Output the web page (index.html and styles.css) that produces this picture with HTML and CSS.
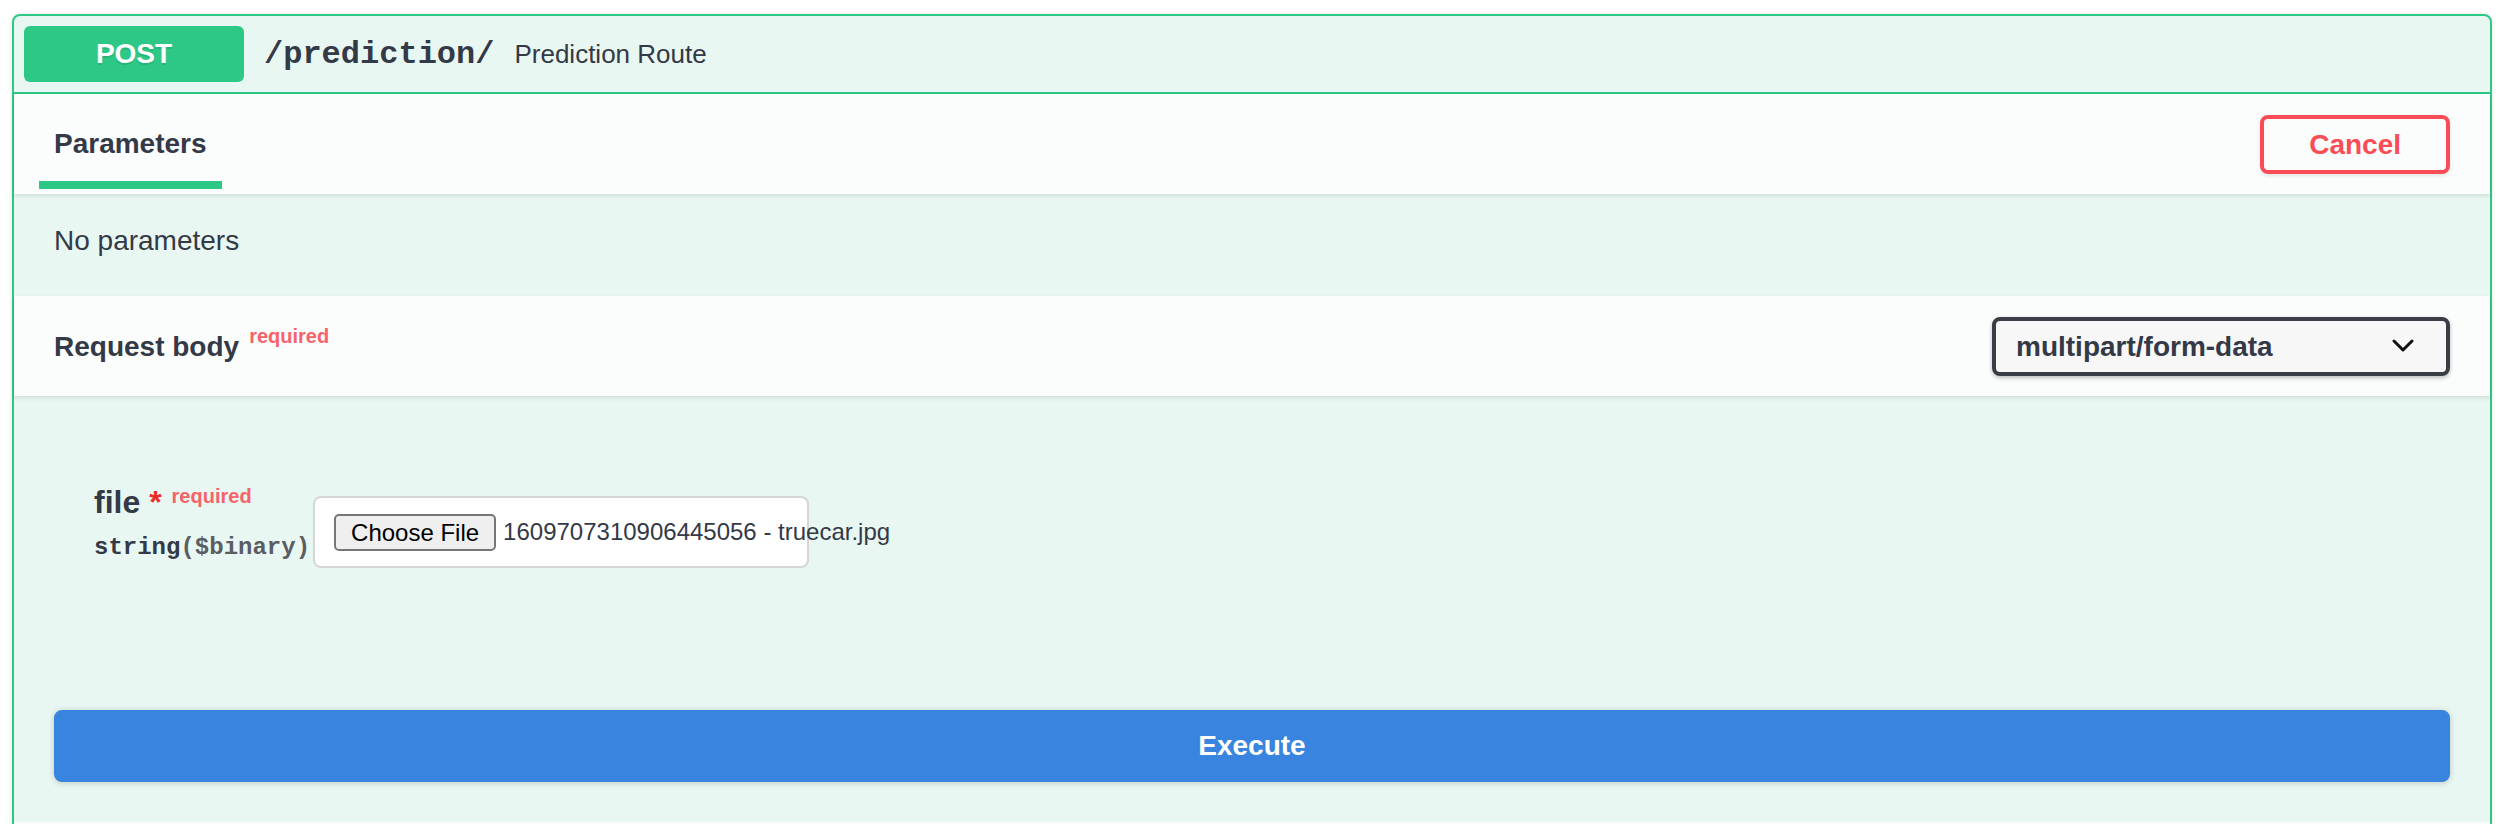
FILE: index.html
```html
<!DOCTYPE html>
<html lang="en">
<head>
<meta charset="utf-8">
<title>POST /prediction/</title>
<link rel="stylesheet" href="styles.css">
</head>
<body>
<div class="page">
  <div class="opblock">
    <div class="summary">
      <span class="method">POST</span>
      <span class="path">/prediction/</span>
      <span class="summary-desc">Prediction Route</span>
    </div>
    <div class="section-header">
      <div class="tab"><h4 class="tab-title"><span class="tab-label">Parameters</span></h4></div>
      <button class="btn-cancel" type="button">Cancel</button>
    </div>
    <div class="desc-wrapper"><p class="desc-text">No parameters</p></div>
    <div class="section-header">
      <h4 class="section-title body-required">Request body</h4>
      <div class="select">
        <span class="select-text">multipart/form-data</span>
        <svg class="chevron" width="22" height="14" viewBox="0 0 22 14"><polyline points="2,2 11,11 20,2" fill="none" stroke="#111" stroke-width="3" stroke-linecap="round" stroke-linejoin="round"/></svg>
      </div>
    </div>
    <div class="params">
      <div class="param-row">
        <div class="col-name">
          <div class="pname">file<span class="star">&nbsp;*</span><span class="req">required</span></div>
          <div class="ptype">string<span class="fmt">($binary)</span></div>
        </div>
        <div class="col-desc">
          <div class="file-input">
            <span class="choose">Choose File</span>
            <span class="fname">1609707310906445056 - truecar.jpg</span>
          </div>
        </div>
      </div>
    </div>
    <div class="execute-wrapper"><button class="btn-execute" type="button">Execute</button></div>
    <div class="section-strip"></div>
  </div>
</div>
</body>
</html>
```

FILE: styles.css
```css
html, body {
  margin: 0;
  padding: 0;
  background: #ffffff;
  overflow: hidden;
}
body {
  font-family: "Liberation Sans", Arial, sans-serif;
  color: #343947;
}
.page {
  padding: 14px 20px 0 12px;
}
.opblock {
  border: 2px solid #2ec886;
  border-radius: 8px;
  background: #e8f7f1;
  box-shadow: 0 0 4px rgba(0, 0, 0, 0.12);
}
.summary {
  display: flex;
  align-items: center;
  padding: 10px;
  border-bottom: 2px solid #2ec886;
}
.method {
  width: 220px;
  height: 56px;
  line-height: 56px;
  border-radius: 6px;
  background: #2ec886;
  color: #ffffff;
  font-size: 28px;
  font-weight: 700;
  text-align: center;
  text-shadow: 0 2px 0 rgba(0, 0, 0, 0.1);
}
.path {
  padding: 0 20px;
  font-family: "Liberation Mono", "Courier New", monospace;
  font-weight: 700;
  font-size: 32px;
  color: #343947;
}
.summary-desc {
  font-size: 26px;
  color: #343947;
}
.section-header {
  position: relative;
  display: flex;
  align-items: center;
  justify-content: space-between;
  min-height: 100px;
  padding: 0 40px;
  background: #fbfdfc;
  box-shadow: 0 2px 4px rgba(0, 0, 0, 0.1);
}
.tab-title, .section-title {
  margin: 0;
  font-size: 28px;
  font-weight: 700;
  color: #343947;
}
.tab-label {
  position: relative;
}
.tab-label::after {
  content: "";
  position: absolute;
  left: -10%;
  width: 120%;
  bottom: -30px;
  height: 8px;
  background: #2ec886;
}
.section-title {
  padding-top: 2px;
}
.body-required::after {
  content: "required";
  position: relative;
  top: -13px;
  padding: 10px;
  font-size: 20px;
  font-weight: 700;
  color: #f8636a;
}
.btn-cancel {
  padding: 10px 45px;
  font-family: "Liberation Sans", Arial, sans-serif;
  font-size: 28px;
  line-height: 31px;
  font-weight: 700;
  color: #fa4c56;
  background: transparent;
  border: 4px solid #fa4c56;
  border-radius: 8px;
  box-shadow: 0 2px 4px rgba(0, 0, 0, 0.1);
}
.desc-wrapper {
  padding: 26px 40px 34px;
}
.desc-text {
  margin: 0;
  font-size: 28px;
  line-height: 42px;
  color: #343947;
}
.select {
  box-sizing: border-box;
  width: 458px;
  height: 59px;
  display: flex;
  align-items: center;
  justify-content: space-between;
  padding: 0 32px 0 20px;
  background: #f7f7f7;
  border: 4px solid #3a3d46;
  border-radius: 8px;
  box-shadow: 0 2px 4px rgba(0, 0, 0, 0.25);
}
.select-text {
  font-size: 28px;
  font-weight: 700;
  color: #343947;
  padding-top: 2px;
}
.chevron {
  display: block;
}
.params {
  padding: 90px 40px 90px 80px;
}
.param-row {
  display: flex;
  align-items: flex-start;
  gap: 3px;
}
.col-name {
  flex: none;
}
.pname {
  font-size: 32px;
  line-height: 32px;
  font-weight: 700;
  color: #343947;
  white-space: nowrap;
}
.star {
  color: #ee2a2a;
}
.req {
  position: relative;
  top: -10px;
  padding: 10px;
  font-size: 20px;
  font-weight: 700;
  color: #f8636a;
}
.ptype {
  padding-top: 12px;
  font-family: "Liberation Mono", "Courier New", monospace;
  font-size: 24px;
  line-height: 28px;
  font-weight: 700;
  color: #343947;
  white-space: nowrap;
}
.fmt {
  color: #5b5d63;
}
.col-desc {
  flex: none;
}
.file-input {
  box-sizing: border-box;
  width: 496px;
  height: 72px;
  margin: 10px 0 12px;
  display: flex;
  align-items: center;
  padding: 0 19px;
  background: #ffffff;
  border: 2px solid #d6d6d6;
  border-radius: 8px;
}
.choose {
  flex: none;
  box-sizing: border-box;
  height: 37px;
  line-height: 33px;
  padding: 0 15px;
  font-size: 24px;
  color: #000000;
  background: #efefef;
  border: 2px solid #767676;
  border-radius: 5px;
  white-space: nowrap;
}
.fname {
  flex: none;
  margin-left: 7px;
  font-size: 24px;
  color: #343947;
  white-space: nowrap;
}
.execute-wrapper {
  padding: 40px;
}
.btn-execute {
  display: block;
  box-sizing: border-box;
  width: 100%;
  height: 72px;
  padding: 16px 40px;
  font-family: "Liberation Sans", Arial, sans-serif;
  font-size: 28px;
  line-height: 32px;
  font-weight: 700;
  color: #ffffff;
  background: #3884de;
  border: 4px solid #3884de;
  border-radius: 8px;
  box-shadow: 0 1px 6px rgba(0, 0, 0, 0.18);
}
.section-strip {
  height: 100px;
  background: #fbfdfc;
}
```
